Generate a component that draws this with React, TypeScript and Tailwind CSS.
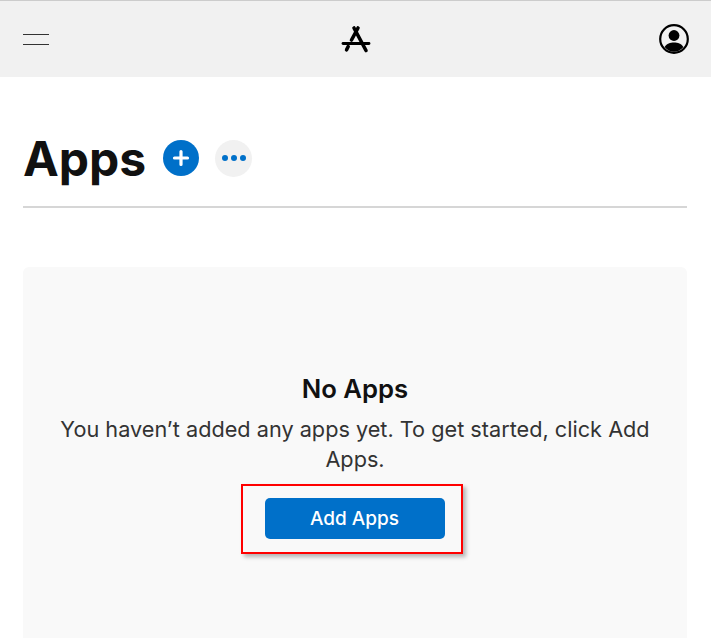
function StoreLogo() {
  return (
    <svg className="-ml-[2px]" width="30" height="28" viewBox="0 0 30 28" fill="none" stroke="#000" strokeLinecap="round">
      <path d="M13 3 L25 25.5" strokeWidth="3.6" />
      <path d="M17 3 L10.5 15" strokeWidth="3.6" />
      <path d="M7.2 21.5 L5.6 24.8" strokeWidth="3.6" />
      <path d="M2 18.5 H28" strokeWidth="2.8" />
    </svg>
  );
}

function UserIcon() {
  return (
    <svg width="32" height="32" viewBox="0 0 32 32">
      <circle cx="16" cy="16" r="13.8" fill="none" stroke="#000" strokeWidth="2.2" />
      <circle cx="16" cy="12.5" r="5.4" fill="#000" />
      <path d="M6.6 24 C9 20.4 12 19.4 16 19.4 C20 19.4 23 20.4 25.4 24 C23 27 19.8 28.8 16 28.8 C12.2 28.8 9 27 6.6 24 Z" fill="#000" />
    </svg>
  );
}

export default function App() {
  return (
    <div className="h-[638px] overflow-hidden bg-white font-['Inter',sans-serif] text-[#111]">
      <header className="flex h-[77px] items-center border-t border-[#cccccc] bg-[#f1f1f1] pl-[23px] pr-[21px]">
        <div className="flex-1">
          <div className="flex w-[26px] flex-col gap-[9px]">
            <div className="h-px bg-[#333]" />
            <div className="h-px bg-[#333]" />
          </div>
        </div>
        <StoreLogo />
        <div className="flex flex-1 justify-end">
          <UserIcon />
        </div>
      </header>

      <main className="pl-[23px] pr-[24px]">
        <div className="flex h-[131px] items-center border-b-2 border-[#d6d6d6] pt-[44px] pb-[11px]">
          <h1 className="mt-[2px] text-[48px] font-bold leading-none text-[#111]">Apps</h1>
          <button className="ml-[17px] flex h-[36px] w-[36px] items-center justify-center rounded-full bg-[#0070c9]">
            <svg width="20" height="20" viewBox="0 0 20 20" stroke="#fff" strokeWidth="3.2" strokeLinecap="round">
              <path d="M10 3.5 V16.5 M3.5 10 H16.5" />
            </svg>
          </button>
          <button className="ml-[16px] flex h-[37px] w-[37px] items-center justify-center gap-[3px] rounded-full bg-[#f1f1f1]">
            <span className="h-[6px] w-[6px] rounded-full bg-[#0070c9]" />
            <span className="h-[6px] w-[6px] rounded-full bg-[#0070c9]" />
            <span className="h-[6px] w-[6px] rounded-full bg-[#0070c9]" />
          </button>
        </div>

        <section className="mt-[59px] flex h-[400px] flex-col items-center rounded-[6px] bg-[#f9f9f9] px-[32px] pt-[108px] text-center">
          <h2 className="text-[25.7px] font-semibold leading-[28px] text-[#111]">No Apps</h2>
          <p className="mt-[11px] text-[21.7px] leading-[30px] text-[#333]">
            You haven’t added any apps yet. To get started, click Add Apps.
          </p>
          <div className="mr-[7px] mt-[10px] border-2 border-[#ff0000] pb-[13px] pl-[22px] pr-[16px] pt-[12px] shadow-[3px_3px_4px_rgba(0,0,0,0.28)]">
            <button className="h-[41px] w-[180px] rounded-[5px] bg-[#0070c9] pt-px text-[19px] font-medium text-white">
              Add Apps
            </button>
          </div>
        </section>
      </main>
    </div>
  );
}
